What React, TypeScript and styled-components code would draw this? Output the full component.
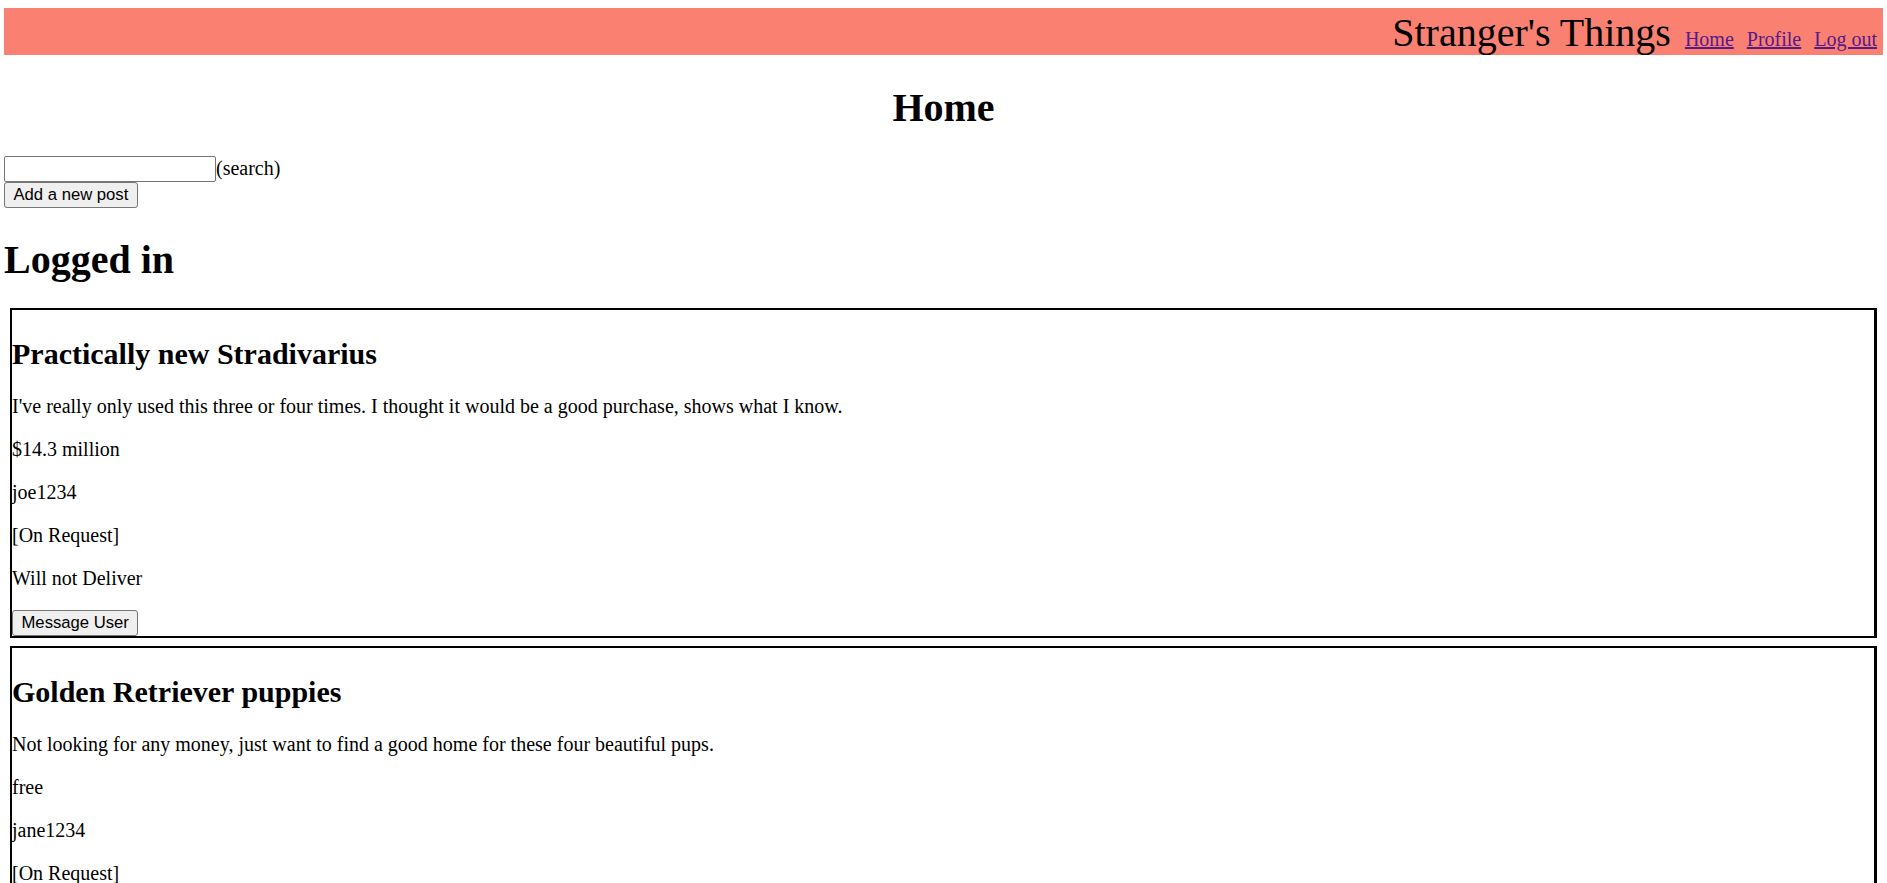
import React from "react";
import styled, { createGlobalStyle } from "styled-components";

const GlobalStyle = createGlobalStyle`
  html, body {
    margin: 0;
    padding: 0;
    background: #ffffff;
  }
  body {
    font-family: "Liberation Serif", "Times New Roman", serif;
    font-size: 20px;
    color: #000000;
  }
`;

const Page = styled.div`
  padding: 8px 4px 0 4px;
`;

const Header = styled.header`
  box-sizing: border-box;
  display: flex;
  justify-content: flex-end;
  align-items: baseline;
  gap: 13px;
  height: 47px;
  padding-top: 3px;
  padding-right: 6px;
  background: #fa8072;
`;

const SiteTitle = styled.span`
  font-size: 40px;
  line-height: 44px;
  margin-right: 1px;
`;

const NavLink = styled.a`
  font-size: 20px;
  color: #551a8b;
  text-decoration: underline;
`;

const PageTitle = styled.h1<{ $center?: boolean }>`
  font-size: 40px;
  font-weight: bold;
  line-height: 46px;
  margin: ${(p) => (p.$center ? "29.5px 0 25px" : "29px 0 25.5px")};
  text-align: ${(p) => (p.$center ? "center" : "left")};
`;

const SearchRow = styled.div`
  display: flex;
  align-items: center;
  font-size: 20px;
`;

const SearchInput = styled.input`
  box-sizing: border-box;
  width: 212px;
  height: 26px;
  margin: 0;
  padding: 1px 2px;
  border: 1px solid #767676;
  border-radius: 2px;
  background: #ffffff;
  font-family: "Liberation Sans", Arial, sans-serif;
  font-size: 16.67px;
`;

const Button = styled.button`
  display: block;
  box-sizing: border-box;
  height: 26px;
  margin: 0;
  padding: 0 8.5px;
  border: 1px solid #767676;
  border-radius: 3px;
  background: #efefef;
  color: #000000;
  font-family: "Liberation Sans", Arial, sans-serif;
  font-size: 16.67px;
  line-height: 24px;
`;

const PostCard = styled.div`
  margin: 8px 6px;
  border: 2px solid #000000;
  border-right-width: 3px;
  border-bottom-width: 2.5px;
`;

const PostTitle = styled.h2`
  font-size: 30px;
  font-weight: bold;
  line-height: 34px;
  margin: 27px 0 24px;
`;

const PostLine = styled.p`
  font-size: 20px;
  line-height: 23px;
  margin: 20px 0;
`;

type Post = {
  title: string;
  description: string;
  price: string;
  author: string;
  location: string;
  delivery: string;
};

const posts: Post[] = [
  {
    title: "Practically new Stradivarius",
    description:
      "I've really only used this three or four times. I thought it would be a good purchase, shows what I know.",
    price: "$14.3 million",
    author: "joe1234",
    location: "[On Request]",
    delivery: "Will not Deliver",
  },
  {
    title: "Golden Retriever puppies",
    description:
      "Not looking for any money, just want to find a good home for these four beautiful pups.",
    price: "free",
    author: "jane1234",
    location: "[On Request]",
    delivery: "Will Deliver",
  },
];

export default function App() {
  return (
    <>
      <GlobalStyle />
      <Page>
        <Header>
          <SiteTitle>Stranger's Things</SiteTitle>
          <NavLink href="#">Home</NavLink>
          <NavLink href="#">Profile</NavLink>
          <NavLink href="#">Log out</NavLink>
        </Header>
        <PageTitle $center>Home</PageTitle>
        <SearchRow>
          <SearchInput type="text" />
          <span>(search)</span>
        </SearchRow>
        <Button>Add a new post</Button>
        <PageTitle>Logged in</PageTitle>
        {posts.map((post) => (
          <PostCard key={post.title}>
            <PostTitle>{post.title}</PostTitle>
            <PostLine>{post.description}</PostLine>
            <PostLine>{post.price}</PostLine>
            <PostLine>{post.author}</PostLine>
            <PostLine>{post.location}</PostLine>
            <PostLine>{post.delivery}</PostLine>
            <Button>Message User</Button>
          </PostCard>
        ))}
      </Page>
    </>
  );
}
